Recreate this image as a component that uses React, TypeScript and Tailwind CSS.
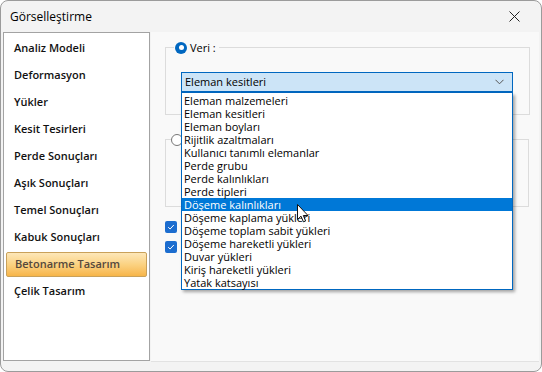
import React from 'react';

const navItems = [
    'Analiz Modeli',
    'Deformasyon',
    'Yükler',
    'Kesit Tesirleri',
    'Perde Sonuçları',
    'Aşık Sonuçları',
    'Temel Sonuçları',
    'Kabuk Sonuçları',
    'Betonarme Tasarım',
    'Çelik Tasarım',
];

const listItems = [
    'Eleman malzemeleri',
    'Eleman kesitleri',
    'Eleman boyları',
    'Rijitlik azaltmaları',
    'Kullanıcı tanımlı elemanlar',
    'Perde grubu',
    'Perde kalınlıkları',
    'Perde tipleri',
    'Döşeme kalınlıkları',
    'Döşeme kaplama yükleri',
    'Döşeme toplam sabit yükleri',
    'Döşeme hareketli yükleri',
    'Duvar yükleri',
    'Kiriş hareketli yükleri',
    'Yatak katsayısı',
];

const CheckBox: React.FC = () => (
    <div className="w-[12px] h-[12px] rounded-[2px] bg-[#1c6dcf] flex items-center justify-center">
        <svg width="8" height="8" viewBox="0 0 8 8" fill="none">
            <path d="M1.2 4.2L3.1 6L6.8 2" stroke="white" strokeWidth="1" />
        </svg>
    </div>
);

export default function App() {
    const selectedNav = 'Betonarme Tasarım';
    const hovered = 'Döşeme kalınlıkları';

    return (
        <div className="w-[542px] h-[372px] rounded-[8px] border border-[#9b9b9b] bg-[#f3f3f3] overflow-hidden flex flex-col font-['Open_Sans','Noto_Sans',sans-serif] text-black">
            {/* title bar */}
            <div className="h-[31px] shrink-0 flex items-center justify-between pl-[9px] pr-[21px]">
                <span className="text-[12px]">Görselleştirme</span>
                <svg width="11" height="11" viewBox="0 0 11 11" fill="none">
                    <path d="M0.5 0.5L10.5 10.5M10.5 0.5L0.5 10.5" stroke="#222" strokeWidth="1" />
                </svg>
            </div>

            <div className="flex-1 flex pl-[2px] pr-[2px] pb-[9px] gap-[1px]">
                {/* left navigation */}
                <div className="w-[147px] shrink-0 bg-white border border-[#a3a3a3] pt-[2px] mb-[1px]">
                    {navItems.map(n => (
                        <div key={n} className="h-[27px] flex items-center px-[2px]">
                            {n === selectedNav ? (
                                <div className="h-[25px] w-full flex items-center px-[8px] rounded-[2px] border border-[#c9a15a] bg-gradient-to-b from-[#fde7b8] via-[#fbd281] to-[#f7b548] text-[11px] font-semibold text-[#55483c]">
                                    {n}
                                </div>
                            ) : (
                                <div className="h-[25px] w-full flex items-center px-[8px] text-[11px] font-semibold text-[#111]">
                                    {n}
                                </div>
                            )}
                        </div>
                    ))}
                </div>

                {/* right content */}
                <div className="flex-1 bg-[#f9f9f9] border-b border-[#e2e2e2] relative pt-[15px] pl-[14px] pr-[9px]">
                    {/* group 1 */}
                    <div className="h-[68px] border border-[#dcdcdc] relative pt-[24px] pl-[15px] pr-[16px]">
                        <div className="absolute -top-[7px] left-[8px] flex items-center gap-[3px] bg-[#f9f9f9] pr-[3px] pl-[1px]">
                            <div className="w-[12px] h-[12px] rounded-full bg-[#0067c0] flex items-center justify-center">
                                <div className="w-[5px] h-[5px] rounded-full bg-white" />
                            </div>
                            <span className="text-[11px] leading-[13px]">Veri :</span>
                        </div>
                        <div className="h-[21px] bg-[#cce4f7] border border-[#0067c0] border-b-2 flex items-center justify-between pl-[3px] pr-[8px]">
                            <span className="text-[11px]">Eleman kesitleri</span>
                            <svg width="9" height="6" viewBox="0 0 9 6" fill="none">
                                <path d="M0.5 0.8L4.5 4.8L8.5 0.8" stroke="#555" strokeWidth="1" />
                            </svg>
                        </div>
                    </div>

                    {/* group 2 */}
                    <div className="mt-[24px] h-[68px] border border-[#dcdcdc] relative mr-[1px]">
                        <div className="absolute -top-[6px] left-[5px] w-[12px] h-[12px] rounded-full border border-[#777] bg-white" />
                    </div>

                    {/* checkboxes (labels are hidden behind the open list) */}
                    <div className="mt-[14px] flex flex-col gap-[8px]">
                        <CheckBox />
                        <CheckBox />
                    </div>

                    {/* open dropdown list */}
                    <div className="absolute left-[30px] top-[61px] w-[332px] bg-white border border-t-0 border-[#0067c0] shadow-[2px_2px_3px_rgba(0,0,0,0.35)] pt-[1px]">
                        {listItems.map(it => (
                            <div
                                key={it}
                                className={`h-[13px] flex items-center pl-[2px] text-[11px] leading-[13px] ${it === hovered ? 'bg-[#0078d7] text-white' : 'text-black'}`}
                            >
                                {it}
                            </div>
                        ))}
                    </div>

                    {/* mouse cursor */}
                    <svg className="absolute left-[146px] top-[172px]" width="12" height="19" viewBox="0 0 12 19" fill="none">
                        <path d="M0.5 0.5V15.5L4 12.2L6.4 17.8L8.6 16.9L6.3 11.5H11L0.5 0.5Z" fill="white" stroke="#111" strokeWidth="1" strokeLinejoin="round" />
                    </svg>
                </div>
            </div>
        </div>
    );
}
